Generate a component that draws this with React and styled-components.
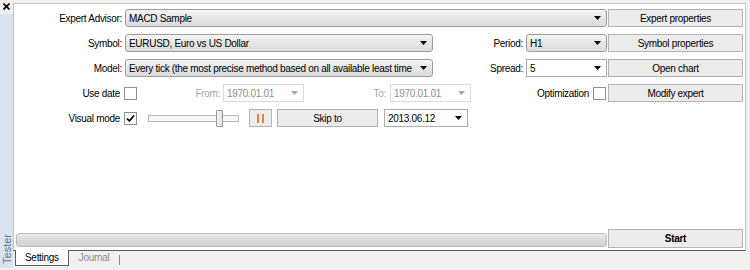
import React from 'react';
import styled, { createGlobalStyle } from 'styled-components';

const Global = createGlobalStyle`
  html, body { margin: 0; padding: 0; }
  body { background: #f0f0f0; font-family: "Liberation Sans", Arial, sans-serif; }
`;

const Window = styled.div`
  width: 750px;
  height: 270px;
  display: flex;
  background: #f0f0f0;
  overflow: hidden;
  font-size: 10px;
  letter-spacing: -0.3px;
  color: #000;
`;

const Side = styled.div`
  width: 13px;
  display: flex;
  flex-direction: column;
`;

const CloseBox = styled.div`
  height: 14px;
  display: flex;
  align-items: flex-start;
  justify-content: center;
  padding-top: 3px;
  box-sizing: border-box;
`;

const SideStrip = styled.div`
  flex: 1;
  margin-bottom: 2px;
  background: #dae4f1;
  display: flex;
  flex-direction: column;
  justify-content: flex-end;
  align-items: center;
  padding-bottom: 4px;
`;

const SideLabel = styled.span`
  writing-mode: vertical-rl;
  transform: rotate(180deg);
  font-size: 11px;
  letter-spacing: 0;
  color: #66768a;
`;

const Main = styled.div`
  flex: 1;
  display: flex;
  flex-direction: column;
  padding: 3px 4px 0 0;
`;

const Panel = styled.div`
  flex: 1;
  background: #fff;
  border: 1px solid #c2c2c2;
  border-bottom: 1px solid #5c5c5c;
  padding: 5px 2px 2px 0;
  display: flex;
  flex-direction: column;
`;

const Form = styled.div`
  display: flex;
  flex-direction: column;
  gap: 7px;
`;

const Row = styled.div`
  display: flex;
  align-items: center;
  height: 18px;
`;

const Label = styled.span`
  width: ${p => p.$w}px;
  flex: none;
  text-align: right;
  margin-right: ${p => p.$gap ?? 3}px;
  color: ${p => (p.$disabled ? '#a3a3a3' : '#000')};
  white-space: nowrap;
`;

const ComboBox = styled.div`
  width: ${p => p.$w}px;
  flex: none;
  height: ${p => p.$h || 18}px;
  box-sizing: border-box;
  display: flex;
  align-items: center;
  padding: 0 5px 0 3px;
  border: 1px solid
    ${p => (p.$variant === 'list' ? '#9c9c9c' : p.$variant === 'disabled' ? '#d9d9d9' : '#abadb3')};
  border-radius: ${p => (p.$variant === 'list' ? '3px' : '0')};
  background: ${p =>
    p.$variant === 'list' ? 'linear-gradient(#f5f5f5, #e6e6e6 50%, #dcdcdc)' : '#fff'};
  color: ${p => (p.$variant === 'disabled' ? '#8f8f8f' : '#000')};
  margin-left: ${p => p.$ml || 0}px;
`;

const ComboText = styled.span`
  flex: 1;
  white-space: nowrap;
  overflow: hidden;
`;

const Arrow = ({ color }) => (
  <svg width="7" height="4" viewBox="0 0 7 4" style={{ flex: 'none', marginLeft: 4 }}>
    <path d="M0 0 H7 L3.5 4 Z" fill={color} />
  </svg>
);

const Combo = ({ w, h, variant = 'list', ml, children }) => (
  <ComboBox $w={w} $h={h} $variant={variant} $ml={ml}>
    <ComboText>{children}</ComboText>
    <Arrow color={variant === 'disabled' ? '#a6a6a6' : '#000'} />
  </ComboBox>
);

const Button = styled.div`
  width: ${p => p.$w || 135}px;
  flex: none;
  height: ${p => p.$h || 18}px;
  box-sizing: border-box;
  border: 1px solid #b3b3b3;
  background: #ececec;
  display: flex;
  align-items: center;
  justify-content: center;
  font-weight: ${p => (p.$bold ? 700 : 400)};
  margin-left: ${p => (p.$auto ? 'auto' : `${p.$ml || 0}px`)};
`;

const Check = styled.div`
  width: 13px;
  height: 13px;
  flex: none;
  box-sizing: border-box;
  border: 1px solid #8e8f8f;
  background: #fff;
  display: flex;
  align-items: center;
  justify-content: center;
  margin-right: ${p => p.$mr || 0}px;
`;

const CheckBox = ({ checked, mr }) => (
  <Check $mr={mr}>
    {checked && (
      <svg width="9" height="9" viewBox="0 0 9 9">
        <path d="M1 4.5 L3.4 7 L8 1.5" stroke="#000" strokeWidth="1.8" fill="none" />
      </svg>
    )}
  </Check>
);

const Slider = styled.div`
  position: relative;
  width: 91px;
  height: 19px;
  flex: none;
  margin-left: 11px;
  display: flex;
  align-items: center;
`;

const Track = styled.div`
  width: 100%;
  height: 7px;
  box-sizing: border-box;
  border: 1px solid #b9b9b9;
  background: #f7f7f7;
`;

const Thumb = styled.div`
  position: absolute;
  left: ${p => p.$pos}px;
  top: 1px;
  width: 7px;
  height: 17px;
  box-sizing: border-box;
  border: 1px solid #9a9a9a;
  border-radius: 1px;
  background: linear-gradient(90deg, #f4f4f4, #e2e2e2);
`;

const PauseBtn = styled(Button)`
  gap: 3px;
`;

const Bar = styled.span`
  width: 2px;
  height: 9px;
  background: #e0893a;
`;

const Spacer = styled.div`
  flex: 1;
`;

const BottomRow = styled.div`
  display: flex;
  align-items: center;
  height: 19px;
`;

const Progress = styled.div`
  flex: 1;
  height: 14px;
  margin: 2px 1px 0 2px;
  box-sizing: border-box;
  border: 1px solid #bdbdbd;
  border-radius: 3px;
  background: linear-gradient(#ececec, #dadada 50%, #d2d2d2);
`;

const TabBar = styled.div`
  height: 19px;
  display: flex;
  align-items: flex-start;
  padding-left: 2px;
`;

const Tab = styled.div`
  height: 16px;
  box-sizing: border-box;
  padding: 0 9px;
  display: flex;
  align-items: center;
  background: ${p => (p.$active ? '#fff' : 'transparent')};
  border: 1px solid ${p => (p.$active ? '#5c5c5c' : 'transparent')};
  border-top: none;
  color: ${p => (p.$active ? '#000' : '#8c8c8c')};
  margin-top: -1px;
`;

const TabSep = styled.span`
  width: 1px;
  height: 10px;
  background: #8c8c8c;
  margin-top: 4px;
`;

export default function App() {
  return (
    <>
      <Global />
      <Window>
        <Side>
          <CloseBox>
            <svg width="7" height="7" viewBox="0 0 7 7">
              <path d="M0.5 0.5 L6.5 6.5 M6.5 0.5 L0.5 6.5" stroke="#000" strokeWidth="1.6" />
            </svg>
          </CloseBox>
          <SideStrip>
            <SideLabel>Tester</SideLabel>
          </SideStrip>
        </Side>
        <Main>
          <Panel>
            <Form>
              <Row>
                <Label $w={108}>Expert Advisor:</Label>
                <Combo w={482}>MACD Sample</Combo>
                <Button $auto>Expert properties</Button>
              </Row>
              <Row>
                <Label $w={108}>Symbol:</Label>
                <Combo w={308}>EURUSD, Euro vs US Dollar</Combo>
                <Label $w={90}>Period:</Label>
                <Combo w={81}>H1</Combo>
                <Button $auto>Symbol properties</Button>
              </Row>
              <Row>
                <Label $w={108}>Model:</Label>
                <Combo w={308}>Every tick (the most precise method based on all available least time</Combo>
                <Label $w={90}>Spread:</Label>
                <Combo w={81} variant="edit">5</Combo>
                <Button $auto>Open chart</Button>
              </Row>
              <Row>
                <Label $w={106} $gap={4}>Use date</Label>
                <CheckBox />
                <Label $w={83} $disabled>From:</Label>
                <Combo w={81} variant="disabled">1970.01.01</Combo>
                <Label $w={82} $gap={4} $disabled>To:</Label>
                <Combo w={81} variant="disabled">1970.01.01</Combo>
                <Label $w={118} $gap={4}>Optimization</Label>
                <CheckBox />
                <Button $auto>Modify expert</Button>
              </Row>
              <Row>
                <Label $w={106} $gap={4}>Visual mode</Label>
                <CheckBox checked />
                <Slider>
                  <Track />
                  <Thumb $pos={68} />
                </Slider>
                <PauseBtn $w={23} $ml={10}>
                  <Bar />
                  <Bar />
                </PauseBtn>
                <Button $w={101} $ml={5}>Skip to</Button>
                <Combo w={84} variant="edit" ml={6}>2013.06.12</Combo>
              </Row>
            </Form>
            <Spacer />
            <BottomRow>
              <Progress />
              <Button $bold $h={19}>Start</Button>
            </BottomRow>
          </Panel>
          <TabBar>
            <Tab $active>Settings</Tab>
            <Tab>Journal</Tab>
            <TabSep />
          </TabBar>
        </Main>
      </Window>
    </>
  );
}
